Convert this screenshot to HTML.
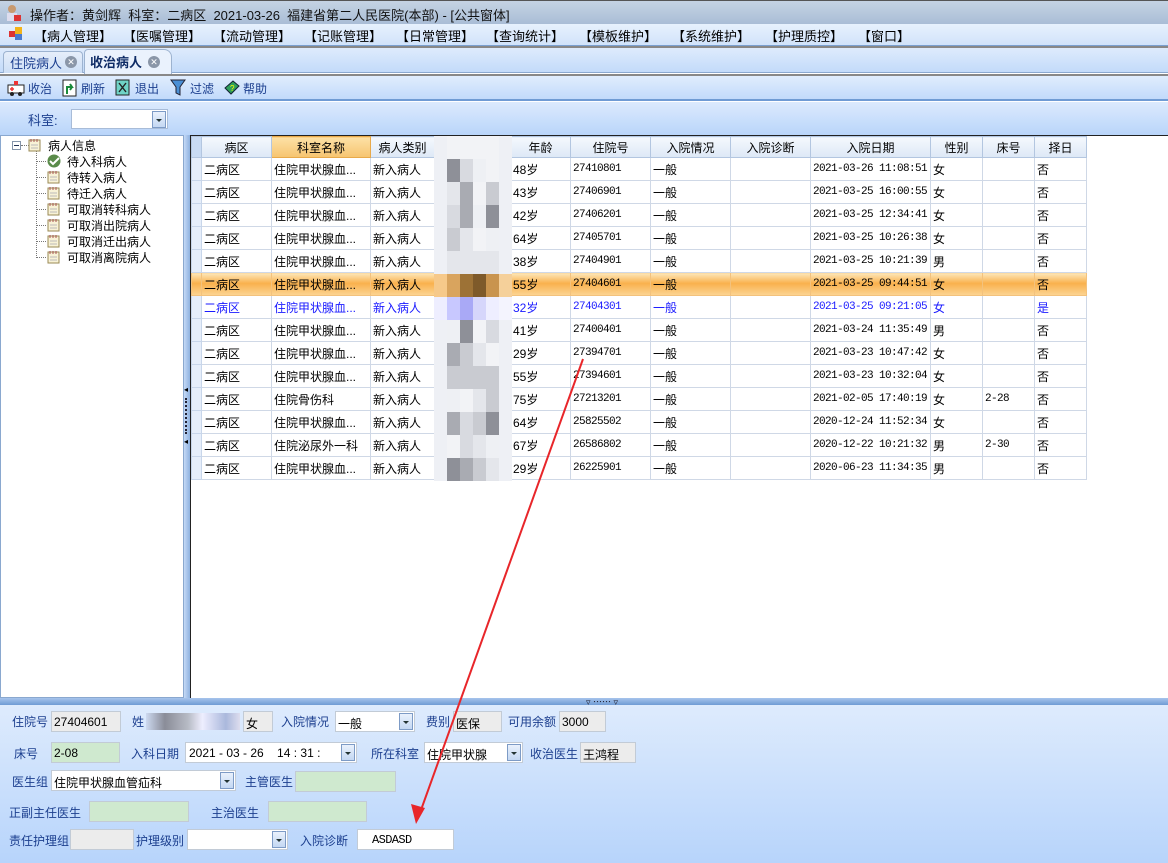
<!DOCTYPE html>
<html><head><meta charset="utf-8"><style>
*{margin:0;padding:0;box-sizing:border-box}
body{width:1168px;height:863px;overflow:hidden;position:relative;font-family:"Liberation Sans","Noto Sans CJK SC","WenQuanYi Zen Hei",sans-serif;font-size:12px;color:#000;background:#fff}
.a{position:absolute}
.t{white-space:nowrap}
#title{left:0;top:0;width:1168px;height:24px;background:linear-gradient(#c5d3e3,#a9bdd6);border-top:1px solid #555}
#menu{left:0;top:24px;width:1168px;height:22px;background:linear-gradient(#e7f1fd,#d1e3fa);border-bottom:1px solid #7aa0d0}
#tabs{left:0;top:46px;width:1168px;height:27px;background:linear-gradient(#deebfc,#c3dbfa);border-top:2px solid #888;border-bottom:1px solid #8aa8cf}
#tb{left:0;top:74px;width:1168px;height:27px;background:linear-gradient(#e0edfd,#c2dafb);border-top:2px solid #888;border-bottom:2px solid #6f9bd4}
#flt{left:0;top:102px;width:1168px;height:33px;background:linear-gradient(#dceafd,#b9d5fa)}
#left{left:0;top:135px;width:184px;height:563px;background:#fff;border:1px solid #8aa8cf}
#split{left:184px;top:135px;width:6px;height:563px;background:linear-gradient(90deg,#c4d9f6,#8fb2e0)}
#grid{left:190px;top:135px;width:978px;height:564px;background:#fff;border:1px solid #222;border-right:none}
table{border-collapse:collapse;table-layout:fixed;position:absolute;left:0;top:0}
td{height:23px;border:1px solid #cfd8e6;padding-left:2px;white-space:nowrap;overflow:hidden;font-size:12px}
th{height:21px;font-weight:normal;background:linear-gradient(#f4f8fd,#dde8f6);border:1px solid #b3c6e0;font-size:12px}
td.rh{background:#e6eefa;border-color:#c8d6ea}
tr.sel td{background:linear-gradient(#fde6b8,#f9b14d 45%,#fcd594);border-color:#f3c27d}
tr.blue td{color:#1a1aff}
.mono{font-family:"Liberation Mono","Noto Sans CJK SC",monospace;font-size:11px;letter-spacing:-0.6px}
#hsplit{left:0;top:698px;width:1168px;height:7px;background:linear-gradient(#a7c4ec,#6f9bd4)}
#bot{left:0;top:705px;width:1168px;height:158px;background:linear-gradient(#deebfd,#b7d4fb)}
.lb{position:absolute;color:#1c3f8f;font-size:12px;white-space:nowrap}
.in{position:absolute;height:21px;border:1px solid #c2cbd6;background:#ececec;font-size:12px;padding:3px 2px;white-space:nowrap;overflow:hidden}
.g{background:#cfe9cf}
.w{background:#fff}
.dd{position:absolute;right:1px;top:1px;width:14px;height:17px;background:linear-gradient(#e9f1fc,#c4d8f3);border:1px solid #7d9bc6}
.dd:after{content:"";position:absolute;left:3px;top:7px;border-left:3px solid transparent;border-right:3px solid transparent;border-top:3px solid #233}
</style></head><body>
<div id="title" class="a">
<svg class="a" style="left:4px;top:3px" width="18" height="18"><circle cx="8" cy="5" r="4" fill="#c89a70"/><rect x="3" y="9" width="10" height="8" fill="#dde"/><rect x="10" y="11" width="7" height="6" fill="#d33"/></svg>
<div class="a t" style="left:30px;top:4px;font-size:13px;color:#111">操作者：黄剑辉&nbsp;&nbsp;科室：二病区&nbsp;&nbsp;2021-03-26&nbsp;&nbsp;福建省第二人民医院(本部) - [公共窗体]</div></div>
<div id="menu" class="a" style="font-size:13px">
<svg class="a" style="left:9px;top:3px" width="14" height="14"><rect x="0" y="4" width="6" height="6" fill="#d33"/><rect x="6" y="0" width="7" height="7" fill="#f3b41b"/><rect x="6" y="7" width="7" height="6" fill="#4a7bd0"/></svg>
<div class="a t" style="left:34px;top:2px">【病人管理】</div>
<div class="a t" style="left:123px;top:2px">【医嘱管理】</div>
<div class="a t" style="left:213px;top:2px">【流动管理】</div>
<div class="a t" style="left:304px;top:2px">【记账管理】</div>
<div class="a t" style="left:396px;top:2px">【日常管理】</div>
<div class="a t" style="left:486px;top:2px">【查询统计】</div>
<div class="a t" style="left:579px;top:2px">【模板维护】</div>
<div class="a t" style="left:672px;top:2px">【系统维护】</div>
<div class="a t" style="left:765px;top:2px">【护理质控】</div>
<div class="a t" style="left:858px;top:2px">【窗口】</div></div>
<div id="tabs" class="a">
<div class="a" style="left:3px;top:3px;width:80px;height:22px;background:linear-gradient(#e6eefa,#cddff6);border:1px solid #9db3d0;border-bottom:none;border-radius:4px 4px 0 0"></div>
<div class="a t" style="left:10px;top:5px;font-size:13px;color:#1c3f8f">住院病人</div>
<div class="a" style="left:65px;top:8px;width:12px;height:12px;border-radius:6px;background:#8a96a8;color:#fff;font-size:9px;text-align:center;line-height:12px">✕</div>
<div class="a" style="left:84px;top:1px;width:88px;height:25px;background:#eaf2fd;border:1px solid #9db3d0;border-bottom:none;border-radius:4px 8px 0 0"></div>
<div class="a t" style="left:90px;top:4px;font-size:13px;font-weight:bold;color:#0f2c66">收治病人</div>
<div class="a" style="left:148px;top:8px;width:12px;height:12px;border-radius:6px;background:#8a96a8;color:#fff;font-size:9px;text-align:center;line-height:12px">✕</div></div>
<div id="tb" class="a">
<svg class="a" style="left:7px;top:4px" width="18" height="16"><rect x="1" y="5" width="16" height="8" fill="#fff" stroke="#222"/><circle cx="5" cy="14" r="2" fill="#222"/><circle cx="13" cy="14" r="2" fill="#222"/><rect x="7" y="1" width="4" height="4" fill="#e33"/><path d="M3 9h4M5 7v4" stroke="#e33" stroke-width="1.5"/></svg>
<div class="a t" style="left:28px;top:4px;color:#1c3f8f">收治</div>
<svg class="a" style="left:62px;top:3px" width="16" height="18"><rect x="1" y="1" width="13" height="16" fill="#fff" stroke="#222"/><path d="M5 15V8h5l-2-3M10 8l-2 3" stroke="#1a8a3a" stroke-width="2" fill="none"/></svg>
<div class="a t" style="left:81px;top:4px;color:#1c3f8f">刷新</div>
<svg class="a" style="left:115px;top:3px" width="15" height="17"><rect x="1" y="1" width="13" height="15" fill="#6fd3c6" stroke="#222"/><path d="M4 4l7 9M11 4l-7 9" stroke="#222" stroke-width="1.4"/></svg>
<div class="a t" style="left:135px;top:4px;color:#1c3f8f">退出</div>
<svg class="a" style="left:170px;top:3px" width="16" height="17"><path d="M1 1h14l-5 7v8l-4-2V8z" fill="#4a8fd5" stroke="#223"/></svg>
<div class="a t" style="left:190px;top:4px;color:#1c3f8f">过滤</div>
<svg class="a" style="left:223px;top:3px" width="17" height="17"><path d="M2 9l8-7 6 5-8 8z" fill="#2f9e5a" stroke="#123"/><text x="7" y="12" font-size="8" fill="#ff0" font-family="Liberation Sans">?</text></svg>
<div class="a t" style="left:243px;top:4px;color:#1c3f8f">帮助</div></div>
<div id="flt" class="a">
<div class="a t" style="left:28px;top:8px;font-size:13px;color:#1c3f8f">科室:</div>
<div class="in w" style="left:71px;top:7px;width:97px;height:20px;border-color:#a8bcd8"><div class="dd"></div></div></div>
<div id="left" class="a">
<div class="a" style="left:11px;top:5px;width:9px;height:9px;border:1px solid #8595aa;background:#fff"></div><div class="a" style="left:13px;top:9px;width:5px;height:1px;background:#235"></div>
<div class="a" style="left:35px;top:15px;width:1px;height:107px;border-left:1px dotted #777"></div>
<div class="a" style="left:20px;top:9px;width:8px;border-top:1px dotted #777"></div>
<svg class="a" style="left:27px;top:2px" width="14" height="14"><rect x="1" y="2" width="11" height="11" fill="#f8f2d6" stroke="#9a8a55"/><path d="M3 1v3M6 1v3M9 1v3" stroke="#a55"/><path d="M3 7h7M3 10h7" stroke="#bbb"/></svg>
<div class="a t" style="left:47px;top:1px">病人信息</div>
<div class="a" style="left:35px;top:25px;width:10px;border-top:1px dotted #777"></div>
<svg class="a" style="left:46px;top:18px" width="15" height="15"><circle cx="7" cy="7" r="6.5" fill="#5a8b4a"/><path d="M3 7l3 3 6-6" stroke="#fff" stroke-width="2" fill="none"/></svg>
<div class="a t" style="left:66px;top:17px">待入科病人</div>
<div id="tree"></div>
</div>
<div id="split" class="a">
<div class="a" style="left:0;top:250px;font-size:8px">◂</div>
<div class="a" style="left:1px;top:263px;width:2px;height:36px;border-left:2px dotted #223"></div>
<div class="a" style="left:0;top:302px;font-size:8px">◂</div></div>
<div id="grid" class="a">
<table id="tbl"><colgroup><col style="width:10px"><col style="width:70px"><col style="width:99px"><col style="width:64px"><col style="width:76px"><col style="width:60px"><col style="width:80px"><col style="width:80px"><col style="width:80px"><col style="width:120px"><col style="width:52px"><col style="width:52px"><col style="width:52px"></colgroup>
<tbody id="tb1"></tbody></table>
<div id="blur" class="a" style="left:243px;top:-10px;width:76px;height:345px"></div>
</div>
<div id="hsplit" class="a"><div class="a t" style="left:586px;top:-3px;font-size:9px;color:#223">▿ ⋯⋯ ▿</div></div>
<div id="bot" class="a">
<div class="lb" style="left:12px;top:8px">住院号</div><div class="in" style="left:51px;top:6px;width:70px">27404601</div>
<div class="lb" style="left:132px;top:8px">姓</div><div class="a" style="left:146px;top:8px;width:94px;height:17px;background:linear-gradient(90deg,#cdd9f0,#8a8d98 20%,#b8bcc6 45%,#eef 60%,#aab8dc 85%,#dde)"></div>
<div class="in" style="left:243px;top:6px;width:30px">女</div>
<div class="lb" style="left:281px;top:8px">入院情况</div><div class="in w" style="left:335px;top:6px;width:80px">一般<div class="dd"></div></div>
<div class="lb" style="left:426px;top:8px">费别</div><div class="in" style="left:453px;top:6px;width:49px">医保</div>
<div class="lb" style="left:508px;top:8px">可用余额</div><div class="in" style="left:559px;top:6px;width:47px">3000</div>
<div class="lb" style="left:14px;top:40px">床号</div><div class="in g" style="left:51px;top:37px;width:69px">2-08</div>
<div class="lb" style="left:131px;top:40px">入科日期</div><div class="in w" style="left:185px;top:37px;width:172px;padding-left:3px">2021 - 03 - 26&nbsp;&nbsp;&nbsp; 14 : 31 :<div class="dd"></div></div>
<div class="lb" style="left:371px;top:40px">所在科室</div><div class="in w" style="left:424px;top:37px;width:99px">住院甲状腺<div class="dd"></div></div>
<div class="lb" style="left:530px;top:40px">收治医生</div><div class="in" style="left:580px;top:37px;width:56px">王鸿程</div>
<div class="lb" style="left:12px;top:68px">医生组</div><div class="in w" style="left:51px;top:65px;width:185px">住院甲状腺血管疝科<div class="dd"></div></div>
<div class="lb" style="left:245px;top:68px">主管医生</div><div class="in g" style="left:295px;top:66px;width:101px"></div>
<div class="lb" style="left:9px;top:99px">正副主任医生</div><div class="in g" style="left:89px;top:96px;width:100px"></div>
<div class="lb" style="left:211px;top:99px">主治医生</div><div class="in g" style="left:268px;top:96px;width:99px"></div>
<div class="lb" style="left:9px;top:127px">责任护理组</div><div class="in" style="left:70px;top:124px;width:64px"></div>
<div class="lb" style="left:136px;top:127px">护理级别</div><div class="in w" style="left:187px;top:124px;width:101px"><div class="dd"></div></div>
<div class="lb" style="left:300px;top:127px">入院诊断</div><div class="in w mono" style="left:357px;top:124px;width:97px;padding-left:14px;padding-top:3px">ASDASD</div>
</div>
<svg class="a" style="left:0;top:0;pointer-events:none" width="1168" height="863"><line x1="583" y1="359" x2="421" y2="810" stroke="#e8262a" stroke-width="2"/><path d="M416 824l-5-20 14 4z" fill="#e8262a"/></svg>
<script>
var tr=["待转入病人","待迁入病人","可取消转科病人","可取消出院病人","可取消迁出病人","可取消离院病人"],h="";
tr.forEach(function(s,i){var y=33+i*16;h+='<div class="a" style="left:35px;top:'+(y+8)+'px;width:10px;border-top:1px dotted #777"></div><svg class="a" style="left:46px;top:'+(y+1)+'px" width="14" height="14"><rect x="1" y="2" width="11" height="11" fill="#f8f2d6" stroke="#9a8a55"/><path d="M3 1v3M6 1v3M9 1v3" stroke="#a55"/><path d="M3 7h7M3 10h7" stroke="#bbb"/></svg><div class="a t" style="left:66px;top:'+y+'px">'+s+'</div>';});
document.getElementById("tree").outerHTML=h;
var rows=[["住院甲状腺血...","48岁","27410801","2021-03-26 11:08:51","女","","否"],["住院甲状腺血...","43岁","27406901","2021-03-25 16:00:55","女","","否"],["住院甲状腺血...","42岁","27406201","2021-03-25 12:34:41","女","","否"],["住院甲状腺血...","64岁","27405701","2021-03-25 10:26:38","女","","否"],["住院甲状腺血...","38岁","27404901","2021-03-25 10:21:39","男","","否"],["住院甲状腺血...","55岁","27404601","2021-03-25 09:44:51","女","","否"],["住院甲状腺血...","32岁","27404301","2021-03-25 09:21:05","女","","是"],["住院甲状腺血...","41岁","27400401","2021-03-24 11:35:49","男","","否"],["住院甲状腺血...","29岁","27394701","2021-03-23 10:47:42","女","","否"],["住院甲状腺血...","55岁","27394601","2021-03-23 10:32:04","女","","否"],["住院骨伤科","75岁","27213201","2021-02-05 17:40:19","女","2-28","否"],["住院甲状腺血...","64岁","25825502","2020-12-24 11:52:34","女","","否"],["住院泌尿外一科","67岁","26586802","2020-12-22 10:21:32","男","2-30","否"],["住院甲状腺血...","29岁","26225901","2020-06-23 11:34:35","男","","否"]];
var s='<tr><th style="background:#c9dbf3"></th><th>病区</th><th style="background:linear-gradient(#fde1a6,#f6c470);border-color:#e8a94a">科室名称</th><th>病人类别</th><th></th><th>年龄</th><th>住院号</th><th>入院情况</th><th>入院诊断</th><th>入院日期</th><th>性别</th><th>床号</th><th>择日</th></tr>';
rows.forEach(function(r,i){s+='<tr class="'+(i==5?'sel':i==6?'blue':'')+'"><td class="rh"></td><td>二病区</td><td>'+r[0]+'</td><td>新入病人</td><td></td><td>'+r[1]+'</td><td class="mono">'+r[2]+'</td><td>一般</td><td></td><td class="mono">'+r[3]+'</td><td>'+r[4]+'</td><td class="mono">'+r[5]+'</td><td>'+r[6]+'</td></tr>';});
document.getElementById("tb1").innerHTML=s;
var b="",g=["#f2f3f6","#e4e6eb","#c9cbd1","#a9abb2","#8e9098","#d8dae0","#eef0f4"];
for(var y=0;y<15;y++)for(var x=0;x<6;x++){var c=g[(x*7+y*3+(x*y)%5)%7];if(x==0||x==5)c="#eef0f5";if(y==6)c=["#f6c98a","#d9a45e","#9d7236","#7e5a2a","#c9944e","#f5d09a"][x];if(y==7)c=["#eef","#c8c8ff","#a9a9f6","#d6d6fb","#eef","#f4f4fe"][x];b+='<div class="a" style="left:'+(x*13)+'px;top:'+(y*23+10)+'px;width:13px;height:23px;background:'+c+'"></div>';}
document.getElementById("blur").innerHTML=b;
</script>
</body></html>
